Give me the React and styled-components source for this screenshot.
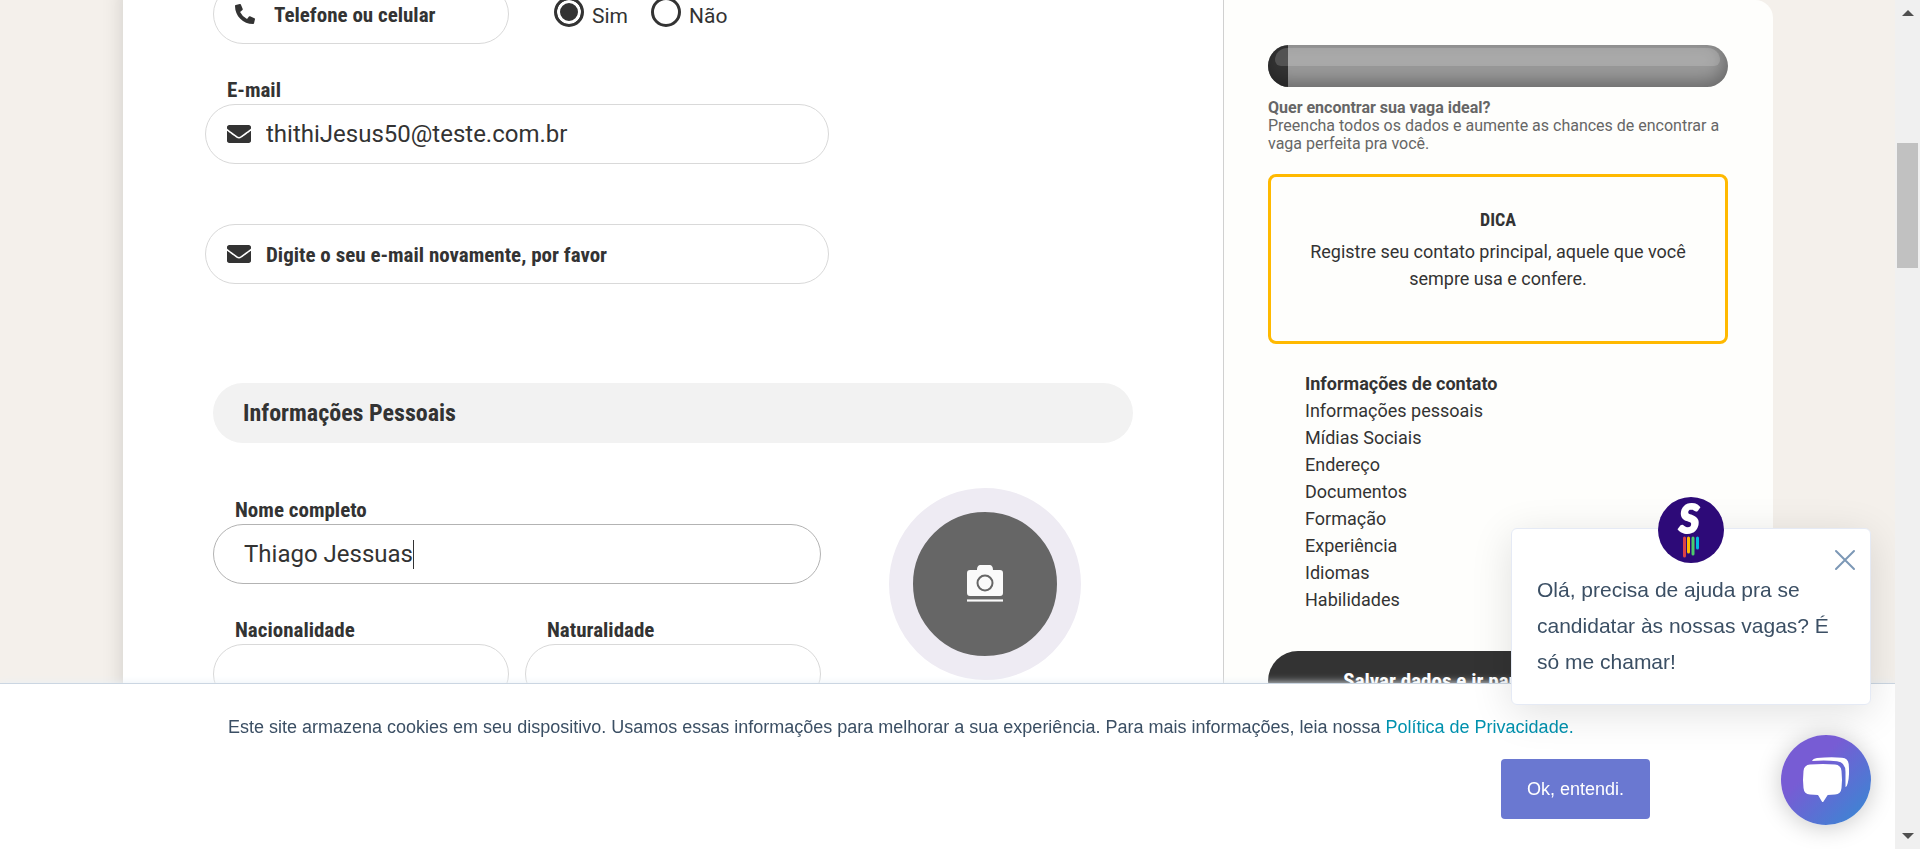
import React from "react";
import styled, { createGlobalStyle, css } from "styled-components";
import { FaEnvelope, FaPhoneAlt } from "react-icons/fa";

const condensed = css`
  font-family: "Roboto Condensed", Roboto, sans-serif;
  font-weight: 700;
`;
const arial = css`
  font-family: "Liberation Sans", Arial, sans-serif;
`;

const GlobalStyle = createGlobalStyle`
  *, *::before, *::after { box-sizing: border-box; }
  body {
    margin: 0;
    background: #f4f0eb;
    color: #333;
    font-family: Roboto, sans-serif;
    font-size: 18px;
    line-height: 27px;
  }
  p, h2, h3, ul { margin: 0; padding: 0; }
`;

/* ---------- page frame ---------- */
const Viewport = styled.div`
  height: 100vh;
  overflow: hidden;
  padding: 0 147px 0 123px;
`;
const Page = styled.main`
  display: grid;
  grid-template-columns: minmax(0, 2fr) minmax(0, 1fr);
  min-height: 100%;
`;
const FormPanel = styled.form`
  margin-top: -16px;
  padding: 0 82px;
  background: #fff;
  box-shadow: 0 0 20px rgba(0, 0, 0, 0.15);
`;
const Sidebar = styled.aside`
  position: relative;
  padding: 45px 45px 0 44px;
  background: #fefefc;
  border-left: 1px solid #d0d0d0;
  border-top-right-radius: 18px;
`;

/* ---------- form ---------- */
const Row = styled.div`
  display: grid;
  grid-template-columns: ${(p) => p.$columns};
`;
const Field = styled.div`
  display: flex;
  flex-direction: column;
  padding: 0 ${(p) => (p.$flush ? 0 : 8)}px;
  margin-bottom: 32px;
`;
const Label = styled.label`
  ${condensed}
  min-height: 28px;
  padding-left: 22px;
  font-size: 21px;
  line-height: 28px;
`;
const InputShell = styled.div`
  display: flex;
  align-items: center;
  height: 60px;
  padding: 0 ${(p) => (p.$icon ? 21 : 30)}px;
  border: 1px solid ${(p) => (p.$active ? "#b3b3b3" : "#d9d9d9")};
  border-radius: 30px;
  background: #fff;
`;
const IconSlot = styled.span`
  display: flex;
  width: 25px;
  margin-right: 14px;
`;
const TextInput = styled.input`
  flex: ${(p) => (p.$fit ? "none" : "1")};
  min-width: 0;
  padding: 0;
  border: 0;
  outline: 0;
  background: transparent;
  color: #333;
  font: 400 24px/30px Roboto, sans-serif;
  ${(p) => p.$fit && "field-sizing: content;"}

  &::placeholder {
    ${condensed}
    font-size: 21px;
    color: #333;
    opacity: 1;
  }
`;
const Caret = styled.span`
  width: 1px;
  height: 29px;
  background: #333;
`;
const RadioGroup = styled.div`
  display: flex;
  gap: 23px;
  padding: 13px 0 0 37px;
`;
const RadioLabel = styled.label`
  display: flex;
  gap: 8px;
  font-size: 21px;
  line-height: 28px;
`;
const RadioText = styled.span`
  padding-top: 5px;
`;
const Radio = styled.input`
  appearance: none;
  width: 30px;
  height: 30px;
  margin: 0;
  border: 3px solid #333;
  border-radius: 50%;
  background: #fff;

  &:checked {
    background: #333;
    box-shadow: inset 0 0 0 3px #fff;
  }
`;
const SectionTitle = styled.h2`
  ${condensed}
  margin: 67px 8px 45px;
  padding: 15px 30px;
  border-radius: 30px;
  background: #f2f2f2;
  font-size: 24px;
  line-height: 30px;
`;
const PersonalFields = styled.div`
  padding-top: 8px;
`;
const AvatarCell = styled.div`
  display: flex;
  justify-content: center;
  align-items: flex-start;
`;
const AvatarButton = styled.button`
  display: flex;
  align-items: center;
  justify-content: center;
  width: 192px;
  height: 192px;
  padding: 0;
  border: 24px solid #eeebf3;
  border-radius: 50%;
  background: #666;
`;

/* ---------- sidebar ---------- */
const Progress = styled.div`
  position: relative;
  height: 42px;
  overflow: hidden;
  border-radius: 21px;
  background: #999;

  &::before {
    content: "";
    position: absolute;
    inset: 0;
    z-index: 1;
    border-radius: 21px;
    box-shadow: inset -3px -6px 16px rgba(0, 0, 0, 0.3);
  }
  &::after {
    content: "";
    position: absolute;
    inset: 3px 8px 21px 7px;
    z-index: 2;
    border-radius: 12px 12px 6px 6px;
    background: rgba(255, 255, 255, 0.16);
  }
`;
const ProgressFill = styled.div`
  height: 100%;
  background: #333;
`;
const Pitch = styled.p`
  margin-top: 12px;
  color: #666;
  font-size: 16px;
  line-height: 18px;
`;
const Tip = styled.section`
  min-height: 170px;
  margin-top: 21px;
  padding: 29px 30px;
  border: 3px solid #ffb900;
  border-radius: 8px;
  text-align: center;
`;
const TipTitle = styled.h3`
  ${condensed}
  margin-bottom: 5px;
  font-size: 18px;
`;
const Steps = styled.ul`
  margin: 26px 0 38px 37px;
  list-style: none;
`;
const Step = styled.li`
  font-weight: ${(p) => (p.$current ? 700 : 400)};
`;
const SaveButton = styled.button`
  ${condensed}
  width: 100%;
  height: 60px;
  border: 0;
  border-radius: 30px;
  background: #333;
  color: #fff;
  font-size: 21px;
`;

/* ---------- cookie bar ---------- */
const CookieBar = styled.section`
  ${arial}
  position: fixed;
  right: 25px;
  bottom: 0;
  left: 0;
  display: flex;
  flex-direction: column;
  gap: 18px;
  padding: 30px 245px 30px 228px;
  border-top: 1px solid #cbd6e2;
  background: #fff;
  box-shadow: 0 0 8px #eaf0f6;
  color: #3b4f64;
`;
const CookieLink = styled.a`
  color: #0091ae;
  text-decoration: none;
`;
const AcceptButton = styled.button`
  ${arial}
  align-self: flex-end;
  height: 60px;
  padding: 0 26px;
  border: 0;
  border-radius: 4px;
  background: #6a78d1;
  color: #fff;
  font-size: 18px;
`;

/* ---------- chat ---------- */
const ChatPopup = styled.section`
  ${arial}
  position: fixed;
  right: 49px;
  bottom: 144px;
  width: 360px;
  padding: 43px 25px 24px;
  border: 1px solid #e5eaf5;
  border-radius: 6px;
  background: #fff;
  box-shadow: 0 8px 42px rgba(0, 0, 0, 0.12);
  color: #3b4f64;
  font-size: 21px;
  line-height: 36px;
`;
const ChatLogo = styled.svg`
  position: absolute;
  top: -32px;
  left: 146px;
  overflow: visible;
`;
const CloseButton = styled.button`
  position: absolute;
  top: 20px;
  right: 14px;
  display: flex;
  padding: 0;
  border: 0;
  background: none;
`;
const ChatButton = styled.button`
  position: fixed;
  right: 49px;
  bottom: 24px;
  display: flex;
  width: 90px;
  height: 90px;
  padding: 0;
  border: 0;
  border-radius: 50%;
  background: linear-gradient(135deg, #775cd4 35%, #3e84d3 90%);
  box-shadow: 0 2px 24px rgba(0, 0, 0, 0.22);
`;

/* ---------- scrollbar ---------- */
const ScrollTrack = styled.div`
  position: fixed;
  top: 0;
  right: 0;
  bottom: 0;
  display: flex;
  flex-direction: column;
  align-items: center;
  justify-content: space-between;
  width: 25px;
  padding: 10px 0;
  background: #f0f0f0;
`;
const ScrollThumb = styled.div`
  position: absolute;
  top: 143px;
  right: 2px;
  width: 21px;
  height: 125px;
  background: #c1c1c1;
`;

const Arrow = ({ down }) => (
  <svg width="12" height="6" viewBox="0 0 12 6" aria-hidden="true">
    <path d={down ? "M0 0h12L6 6z" : "M0 6h12L6 0z"} fill="#505050" />
  </svg>
);

const CameraIcon = () => (
  <svg width="36" height="38" viewBox="0 0 36 38" aria-hidden="true">
    <path
      d="M3 5h7c0-3 1-5 4-5h8c3 0 4 2 4 5h7q3 0 3 3v20q0 3-3 3H3q-3 0-3-3V8q0-3 3-3z"
      fill="#fafafa"
    />
    <circle cx="18" cy="18" r="7.5" fill="none" stroke="#666" strokeWidth="2" />
    <path d="M0 34h36v3H0z" fill="#bdbdbd" />
    <path d="M0 35h36v1H0z" fill="#fafafa" />
  </svg>
);

const FormField = ({ id, label, flush, icon, active, type = "text", value, ...rest }) => (
  <Field $flush={flush}>
    {label !== undefined && <Label htmlFor={id}>{label}</Label>}
    <InputShell $icon={!!icon} $active={active}>
      {icon && <IconSlot>{icon}</IconSlot>}
      <TextInput id={id} type={type} defaultValue={value} $fit={active} {...rest} />
      {active && <Caret />}
    </InputShell>
  </Field>
);

const twoThirds = "minmax(0, 2fr) minmax(0, 1fr)";
const oneThird = "minmax(0, 1fr) minmax(0, 2fr)";
const halves = "minmax(0, 1fr) minmax(0, 1fr)";

const steps = [
  "Informações de contato",
  "Informações pessoais",
  "Mídias Sociais",
  "Endereço",
  "Documentos",
  "Formação",
  "Experiência",
  "Idiomas",
  "Habilidades",
];

const progress = 4.4;

export default function App() {
  return (
    <>
      <GlobalStyle />
      <Viewport>
        <Page>
          <FormPanel onSubmit={(e) => e.preventDefault()}>
            <Row $columns={oneThird}>
              <FormField
                id="phone"
                type="tel"
                aria-label="Telefone ou celular"
                placeholder="Telefone ou celular"
                icon={<FaPhoneAlt size={20} />}
              />
              <RadioGroup>
                <RadioLabel>
                  <Radio type="radio" name="whatsapp" defaultChecked />
                  <RadioText>Sim</RadioText>
                </RadioLabel>
                <RadioLabel>
                  <Radio type="radio" name="whatsapp" />
                  <RadioText>Não</RadioText>
                </RadioLabel>
              </RadioGroup>
            </Row>
            <Row $columns={twoThirds}>
              <div>
                <FormField
                  id="email"
                  flush
                  label="E-mail"
                  value="thithiJesus50@teste.com.br"
                  icon={<FaEnvelope size={24} />}
                />
                <FormField
                  id="email-again"
                  flush
                  label=""
                  aria-label="Digite o seu e-mail novamente, por favor"
                  placeholder="Digite o seu e-mail novamente, por favor"
                  icon={<FaEnvelope size={24} />}
                />
              </div>
            </Row>

            <SectionTitle>Informações Pessoais</SectionTitle>

            <Row $columns={twoThirds}>
              <PersonalFields>
                <FormField id="name" label="Nome completo" value="Thiago Jessuas" active />
                <Row $columns={halves}>
                  <FormField id="nationality" label="Nacionalidade" />
                  <FormField id="birthplace" label="Naturalidade" />
                </Row>
              </PersonalFields>
              <AvatarCell>
                <AvatarButton type="button" aria-label="Foto">
                  <CameraIcon />
                </AvatarButton>
              </AvatarCell>
            </Row>
          </FormPanel>

          <Sidebar>
            <Progress role="progressbar" aria-valuenow={progress}>
              <ProgressFill style={{ width: `${progress}%` }} />
            </Progress>
            <Pitch>
              <strong>Quer encontrar sua vaga ideal?</strong>
              <br />
              Preencha todos os dados e aumente as chances de encontrar a vaga perfeita pra você.
            </Pitch>
            <Tip>
              <TipTitle>DICA</TipTitle>
              <p>Registre seu contato principal, aquele que você sempre usa e confere.</p>
            </Tip>
            <Steps>
              {steps.map((step, i) => (
                <Step key={step} $current={i === 0}>
                  {step}
                </Step>
              ))}
            </Steps>
            <SaveButton type="button">Salvar dados e ir para próximo passo</SaveButton>
          </Sidebar>
        </Page>
      </Viewport>

      <CookieBar>
        <p>
          Este site armazena cookies em seu dispositivo. Usamos essas informações para melhorar a sua
          experiência. Para mais informações, leia nossa{" "}
          <CookieLink href="#privacidade">Política de Privacidade.</CookieLink>
        </p>
        <AcceptButton type="button">Ok, entendi.</AcceptButton>
      </CookieBar>

      <ChatPopup>
        <ChatLogo width="66" height="66" viewBox="0 0 66 66" aria-hidden="true">
          <circle cx="33" cy="33" r="33" fill="#2d0a78" />
          <text
            x="21"
            y="36"
            fill="#fff"
            fontFamily="Lato, sans-serif"
            fontWeight="900"
            fontStyle="italic"
            fontSize="39"
            stroke="#fff"
            strokeWidth="2"
          >
            S
          </text>
          <g strokeWidth="3" strokeLinecap="round">
            <path d="M26.500 41v18" stroke="#dc4146" />
            <path d="M30.500 41v14" stroke="#ffb900" />
            <path d="M35 41v16" stroke="#4ccb6c" />
            <path d="M39.500 41v10" stroke="#00bbe0" />
          </g>
        </ChatLogo>
        <CloseButton type="button" aria-label="Fechar">
          <svg width="22" height="22" viewBox="0 0 22 22" aria-hidden="true">
            <path d="M2 2l18 18M20 2L2 20" stroke="#7c98b6" strokeWidth="2" strokeLinecap="round" />
          </svg>
        </CloseButton>
        <p>Olá, precisa de ajuda pra se candidatar às nossas vagas? É só me chamar!</p>
      </ChatPopup>

      <ChatButton type="button" aria-label="Abrir chat">
        <svg width="90" height="90" viewBox="0 0 90 90" fill="#fff" aria-hidden="true">
          <path d="M29 29.500Q42 28.500 54 29.500Q60 30 60.500 36Q61.500 45 60.500 53Q60 59 54 59.500L46.700 60L42.500 66.500Q41.700 67.500 40.900 66.500L37 60L29 59.500Q23 59 22.500 53Q21.500 45 22.500 36Q23 30 29 29.500z" />
          <path d="M31 26Q32 23.500 36 23Q50 21.500 61 22.700Q67 23 67.700 29Q68.800 40 66.800 48Q66.200 51 64.500 52.300V37Q64.500 27 56 26.200Q44 25 31 26z" />
        </svg>
      </ChatButton>

      <ScrollTrack aria-hidden="true">
        <Arrow />
        <ScrollThumb />
        <Arrow down />
      </ScrollTrack>
    </>
  );
}
